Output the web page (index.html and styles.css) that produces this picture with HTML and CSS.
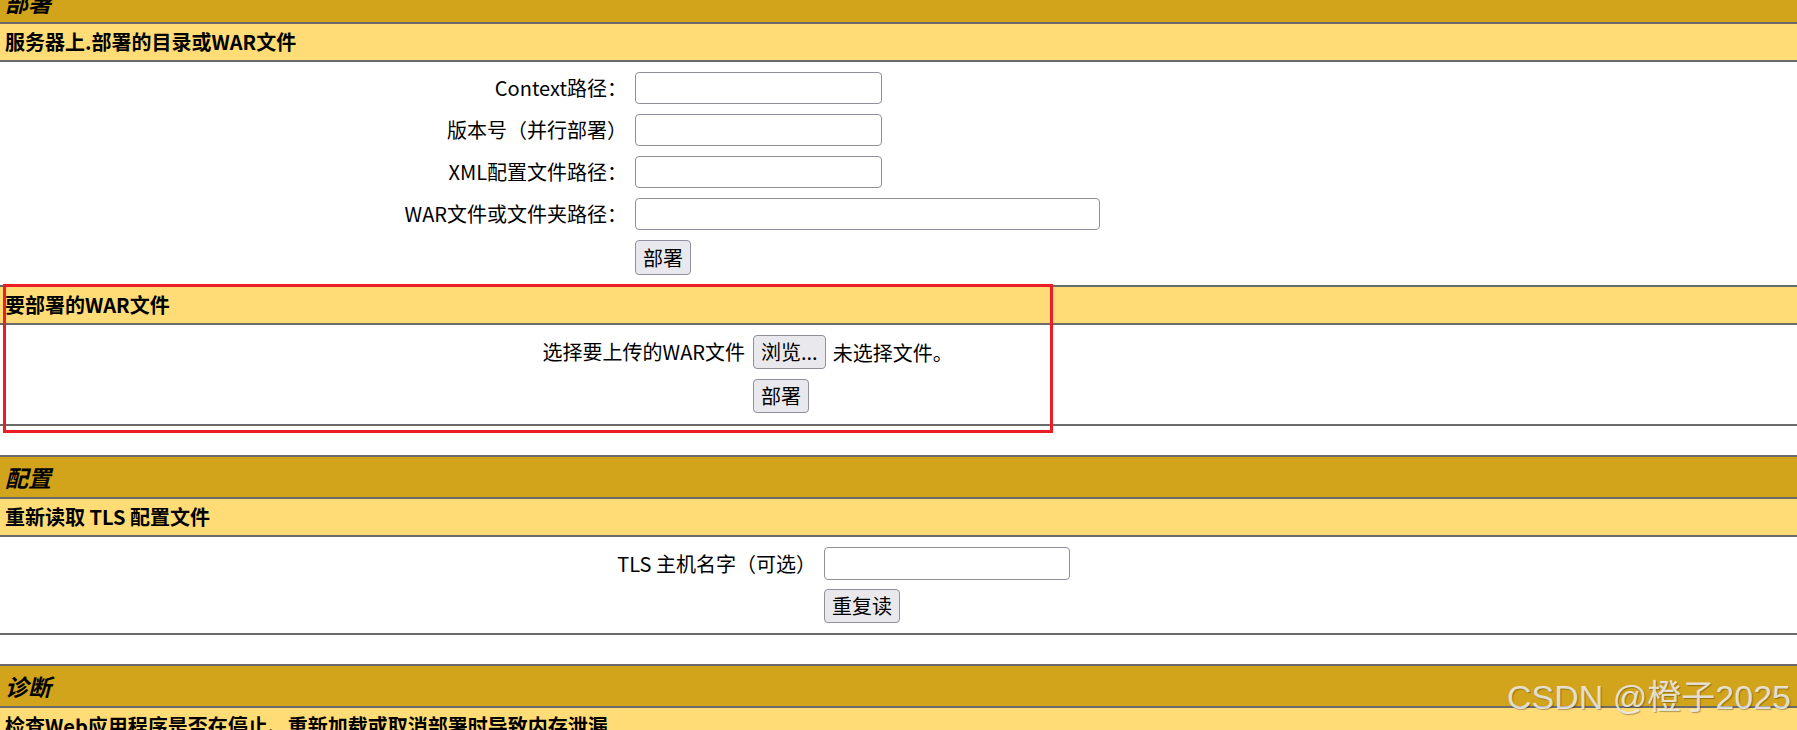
FILE: index.html
```html
<!DOCTYPE html>
<html lang="zh-CN">
<head>
  <meta charset="UTF-8">
  <meta name="viewport" content="width=device-width, initial-scale=1.0">
  <title>Tomcat Web应用程序管理者</title>
  <link rel="stylesheet" href="styles.css">
</head>
<body>

  <div class="page">

    <!-- 部署 -->
    <section class="panel panel-first">
      <div class="panel-title">部署</div>
      <div class="panel-header">服务器上.部署的目录或WAR文件</div>
      <form class="panel-body form form-deploy">
        <label class="form-label">Context路径：</label>
        <div class="form-field"><input type="text" class="text-input"></div>

        <label class="form-label">版本号（并行部署）</label>
        <div class="form-field"><input type="text" class="text-input"></div>

        <label class="form-label">XML配置文件路径：</label>
        <div class="form-field"><input type="text" class="text-input"></div>

        <label class="form-label">WAR文件或文件夹路径：</label>
        <div class="form-field"><input type="text" class="text-input text-input-wide"></div>

        <span class="form-label"></span>
        <div class="form-field"><button type="button" class="btn">部署</button></div>
      </form>

      <div class="panel-header">要部署的WAR文件</div>
      <form class="panel-body form form-upload">
        <label class="form-label">选择要上传的WAR文件</label>
        <div class="form-field file-picker">
          <button type="button" class="btn">浏览...</button>
          <span class="file-name">未选择文件。</span>
        </div>

        <span class="form-label"></span>
        <div class="form-field"><button type="button" class="btn">部署</button></div>
      </form>
    </section>

    <!-- 配置 -->
    <section class="panel">
      <div class="panel-title">配置</div>
      <div class="panel-header">重新读取 TLS 配置文件</div>
      <form class="panel-body form form-tls">
        <label class="form-label">TLS 主机名字（可选）</label>
        <div class="form-field"><input type="text" class="text-input text-input-tls"></div>

        <span class="form-label"></span>
        <div class="form-field"><button type="button" class="btn">重复读</button></div>
      </form>
    </section>

    <!-- 诊断 -->
    <section class="panel">
      <div class="panel-title">诊断</div>
      <div class="panel-header">检查Web应用程序是否在停止、重新加载或取消部署时导致内存泄漏</div>
      <form class="panel-body form form-tls">
        <span class="form-label"></span>
        <div class="form-field"><button type="button" class="btn">查找泄漏</button></div>
      </form>
    </section>

    <!-- annotation over the upload block -->
    <div class="highlight"></div>
  </div>

  <div class="watermark">CSDN @橙子2025</div>

</body>
</html>
```

FILE: styles.css
```css
* {
  box-sizing: border-box;
  margin: 0;
  padding: 0;
}
html {
  overflow: hidden;
}
body {
  font-family: "Noto Sans CJK SC", "Noto Sans", sans-serif;
  font-size: 20px;
  color: #000;
  background-color: #fff;
}
.page {
  display: flow-root;
  position: relative;
}

/* Panels */
.panel {
  border-top: 2px solid #6a6a6a;
  margin-top: 29px;
}
.panel-first {
  margin-top: -20px;
}
.panel-title {
  height: 40px;
  line-height: 40px;
  padding-left: 5px;
  background-color: #d2a41c;
  border-bottom: 2px solid #6a6a6a;
  font-size: 23px;
  font-weight: bold;
  font-style: italic;
  box-sizing: content-box;
}
.panel-header {
  height: 36px;
  line-height: 36px;
  padding-left: 5px;
  background-color: #ffdc75;
  border-bottom: 2px solid #6a6a6a;
  font-size: 20px;
  font-weight: bold;
  box-sizing: content-box;
}
.panel-body {
  border-bottom: 2px solid #6a6a6a;
}

/* Forms */
.form {
  display: grid;
  grid-template-columns: var(--label-w) 1fr;
  column-gap: 8px;
  row-gap: 10px;
  padding: 10px 0 11px;
}
.form-deploy {
  --label-w: 627px;
  padding-bottom: 10px;
}
.form-deploy .btn {
  height: 35px;
}
.form-upload {
  --label-w: 745px;
}
.form-tls {
  --label-w: 816px;
  row-gap: 9px;
  padding-bottom: 10px;
}
.form-label {
  align-self: center;
  text-align: right;
  white-space: nowrap;
  line-height: 1.2;
}
.form-field {
  display: flex;
  align-items: center;
}
.text-input {
  width: 247px;
  height: 32px;
  border: 1px solid #8f8f9d;
  border-radius: 4px;
  background-color: #fff;
  font: inherit;
  padding: 0 6px;
}
.text-input-wide {
  width: 465px;
}
.text-input-tls {
  width: 246px;
  height: 33px;
}
.btn {
  height: 34px;
  padding: 0 7px;
  border: 1px solid #8f8f9d;
  border-radius: 4px;
  background-color: #e9e9ed;
  color: #000;
  font: inherit;
  line-height: 1;
  cursor: pointer;
}
.file-name {
  margin-left: 7px;
}

/* Red annotation box */
.highlight {
  position: absolute;
  left: 3px;
  top: 284px;
  width: 1050px;
  height: 149px;
  border: 3px solid #ee1c25;
}

/* Watermark */
.watermark {
  position: absolute;
  right: 6px;
  top: 677px;
  font-family: "Liberation Sans", "Noto Sans CJK SC", sans-serif;
  font-size: 34px;
  line-height: 1.2;
  color: rgba(240, 240, 240, 0.85);
  text-shadow: 1px 1px 1px rgba(0, 0, 0, 0.3);
}
```
